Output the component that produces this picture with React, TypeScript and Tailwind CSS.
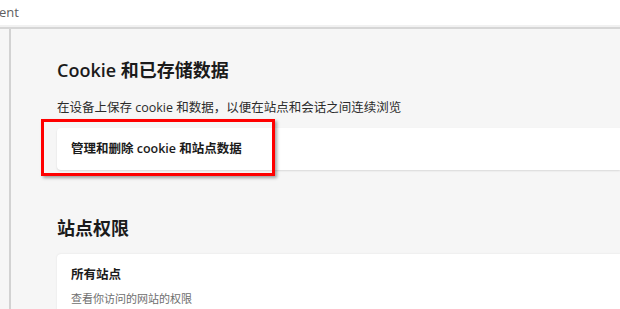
import React from 'react';

const font = { fontFamily: '"Open Sans", "Noto Sans CJK SC", sans-serif' };

export default function App() {
  return (
    <div className="relative h-[309px] w-full overflow-hidden bg-white" style={font}>
      {/* top strip */}
      <div className="flex h-[25px] items-center bg-white text-[13px] text-[#5f5f5f]">
        <span className="-ml-[1px]">ent</span>
      </div>
      <div className="h-[4px] border-b-2 border-[#d6d6d6] bg-[#f1f1f1]" />

      <div className="flex h-full">
        <div className="w-[11px] shrink-0 border-r-2 border-[#d2d2d2] bg-[#f6f6f6]" />
        <main className="flex-1 bg-[#f6f6f6] pl-[46px] pt-[29px] text-[#1b1b1b]">
          <h2 className="text-[18px] font-semibold leading-[24px]">Cookie 和已存储数据</h2>
          <p className="mt-[16px] text-[12.5px] leading-[20px] text-[#2b2b2b]">
            在设备上保存 cookie 和数据，以便在站点和会话之间连续浏览
          </p>
          <div className="mt-[10px] flex h-[42px] items-center rounded-l-[4px] bg-white pl-[14px] shadow-[0_1px_2px_rgba(0,0,0,0.12)]">
            <span className="text-[12.5px] font-semibold">管理和删除 cookie 和站点数据</span>
          </div>

          <h2 className="mt-[46px] text-[18px] font-semibold leading-[24px]">站点权限</h2>
          <div className="mt-[14px] rounded-l-[4px] bg-white pl-[14px] pt-[12px] shadow-[0_0_2px_rgba(0,0,0,0.1)]">
            <div className="text-[12.5px] font-semibold leading-[18px]">所有站点</div>
            <div className="mt-[7px] text-[11px] leading-[16px] text-[#6e6e6e]">查看你访问的网站的权限</div>
            <div className="h-[20px]" />
          </div>
        </main>
      </div>

      {/* annotation box */}
      <div className="absolute left-[41px] top-[119px] h-[57px] w-[234px] border-[3px] border-[#ff0000] shadow-[2px_2px_3px_rgba(0,0,0,0.35)]" />
    </div>
  );
}
